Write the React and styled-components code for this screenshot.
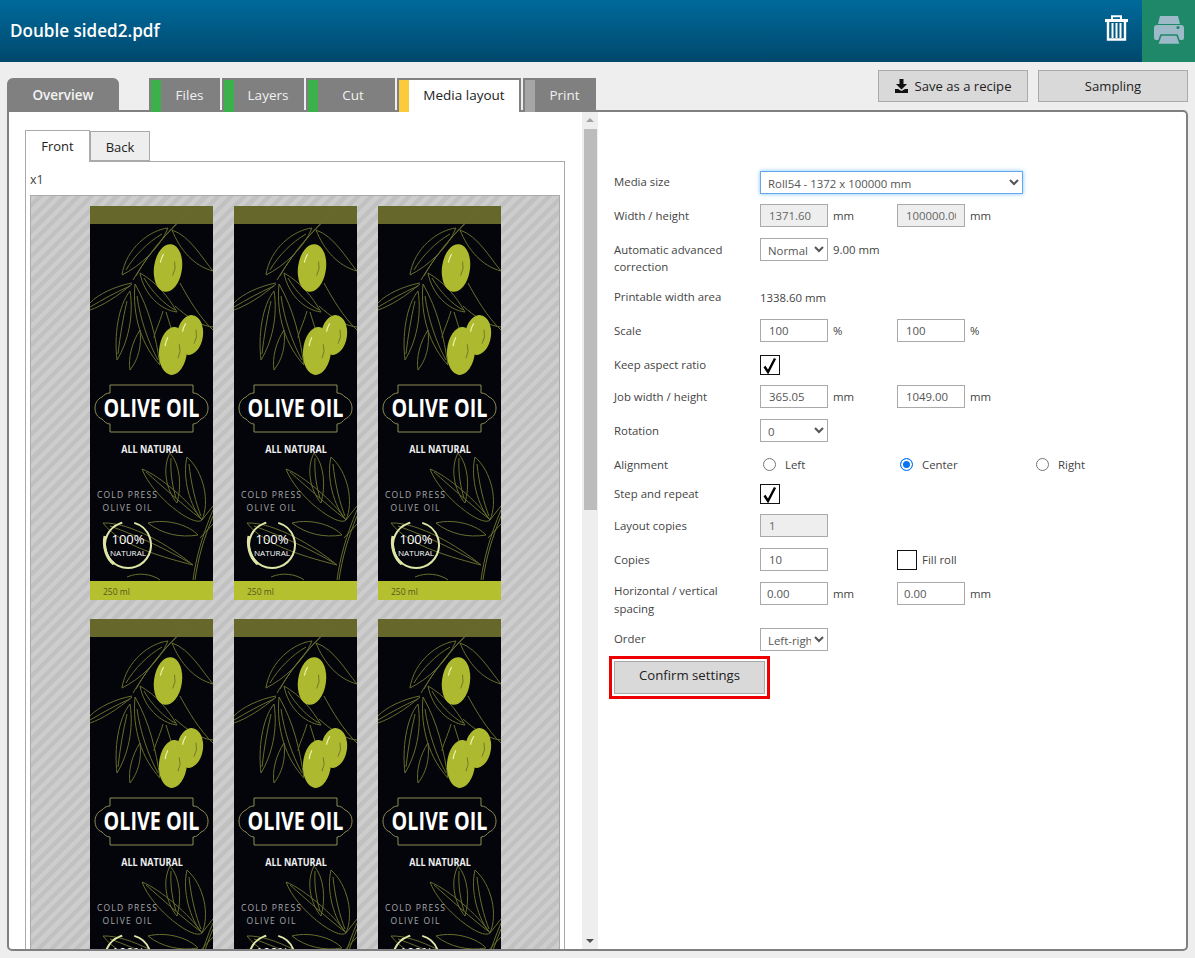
import React from "react";
import styled, { createGlobalStyle } from "styled-components";

const GlobalStyle = createGlobalStyle`
  html, body {
    margin: 0;
    height: 958px;
    overflow: hidden;
    background: #eeeeee;
    font-family: "Open Sans", "Liberation Sans", sans-serif;
  }
`;

const Page = styled.div`
  width: 1195px;
  height: 958px;
  overflow: hidden;
`;

// Header
const Header = styled.header`
  height: 62px;
  display: flex;
  align-items: center;
  justify-content: space-between;
  background: linear-gradient(#006a9b, #00486c);
`;

const Title = styled.h1`
  margin: 0 0 2px 10px;
  font-size: 17.1px;
  font-weight: 600;
  color: #ffffff;
`;

const HeaderActions = styled.div`
  display: flex;
  align-items: center;
  height: 100%;
`;

const TrashButton = styled.div`
  display: flex;
  margin: 0 14px 6px 0;
`;

const PrintButton = styled.div`
  width: 53px;
  height: 100%;
  box-sizing: border-box;
  padding-bottom: 2px;
  display: flex;
  align-items: center;
  justify-content: center;
  background: #1f8868;
`;

// Tabs and actions
const TopBar = styled.div`
  height: 50px;
  margin: 0 7px;
  display: flex;
  justify-content: space-between;
`;

const Tabs = styled.nav`
  position: relative;
  z-index: 1;
  height: 34px;
  margin-top: 16px;
  display: flex;
  gap: 2px;
`;

const OverviewTab = styled.div`
  width: 112px;
  margin-right: 28px;
  display: flex;
  align-items: center;
  justify-content: center;
  background: #808080;
  border-radius: 6px 6px 0 0;
  color: #f4f4f4;
  font-size: 13.5px;
  font-weight: 600;
`;

const Tab = styled.div`
  width: ${(p) => p.$width}px;
  display: flex;
  box-sizing: border-box;
  border: 2px solid #808080;
  border-bottom: 0;
  background: ${(p) => (p.$active ? "#ffffff" : "#808080")};
  color: ${(p) => (p.$active ? "#222222" : "#f0f0f0")};
  font-size: 13.5px;
`;

const TabStatus = styled.span`
  width: 10px;
  flex: none;
  background: ${(p) => p.$color};
`;

const TabLabel = styled.span`
  flex: 1;
  padding: 0 ${(p) => p.$shift || 0}px 2px 0;
  display: flex;
  align-items: center;
  justify-content: center;
`;

const Actions = styled.div`
  display: flex;
  gap: 10px;
  margin-top: 8px;
`;

const ActionButton = styled.button`
  width: 150px;
  height: 32px;
  padding: 0;
  display: flex;
  align-items: center;
  justify-content: center;
  gap: 7px;
  border: 1px solid #aaaaaa;
  background: #d9d9d9;
  color: #222222;
  font-family: inherit;
  font-size: 13.1px;
`;

// Main panel
const Panel = styled.main`
  height: 841px;
  margin: -2px 7px 0;
  box-sizing: border-box;
  display: flex;
  border: 2px solid #808080;
  border-radius: 0 5px 5px 5px;
  background: #ffffff;
  overflow: hidden;
`;

const PreviewPane = styled.section`
  width: 573px;
  flex: none;
  box-sizing: border-box;
  padding: 18px 17px 0 16px;
  overflow: hidden;
`;

const SideTabs = styled.div`
  height: 31px;
  display: flex;
  align-items: flex-end;
`;

const SideTab = styled.div`
  width: ${(p) => p.$width}px;
  height: ${(p) => (p.$active ? 32 : 30)}px;
  margin-bottom: ${(p) => (p.$active ? -1 : 0)}px;
  padding: ${(p) => (p.$active ? "0 0 1px" : "2px 0 0")};
  position: relative;
  box-sizing: border-box;
  display: flex;
  align-items: center;
  justify-content: center;
  border: 1px solid #aaaaaa;
  border-bottom: ${(p) => (p.$active ? "0" : "1px solid #aaaaaa")};
  background: ${(p) => (p.$active ? "#ffffff" : "#eeeeee")};
  color: #222222;
  font-size: 13px;
`;

const SideContent = styled.div`
  height: 800px;
  box-sizing: border-box;
  padding: 0 4px;
  border: 1px solid #aaaaaa;
`;

const Zoom = styled.div`
  height: 33px;
  box-sizing: border-box;
  padding-top: 2px;
  display: flex;
  align-items: center;
  color: #444444;
  font-size: 12.5px;
`;

const Sheet = styled.div`
  height: 780px;
  box-sizing: border-box;
  padding: 10px 0 0 59px;
  display: grid;
  grid-template-columns: repeat(3, 123px);
  grid-auto-rows: 394px;
  column-gap: 21px;
  row-gap: 19px;
  overflow: hidden;
  border: 1px solid #aaaaaa;
  background: repeating-linear-gradient(
    135deg,
    #cdcdcd 0,
    #cdcdcd 4.5px,
    #c1c1c1 4.5px,
    #c1c1c1 9px
  );
`;

const Scrollbar = styled.div`
  width: 16px;
  flex: none;
  padding-top: 6px;
  box-sizing: border-box;
  display: flex;
  flex-direction: column;
  align-items: center;
  background: #eeeeee;
`;

const ScrollArrow = styled.span`
  width: 0;
  height: 0;
  border-left: 4px solid transparent;
  border-right: 4px solid transparent;
  border-bottom: ${(p) => (p.$down ? "0" : "4px solid #a3a3a3")};
  border-top: ${(p) => (p.$down ? "4px solid #505050" : "0")};
`;

const ScrollThumb = styled.div`
  width: 13px;
  height: 381px;
  margin: 7px 0 auto;
  background: #bcbcbc;
`;

const ScrollSpacer = styled.div`
  height: 6px;
  flex: none;
`;

// Settings form
const SettingsPane = styled.section`
  flex: 1;
  padding: 59px 0 0 16px;
  color: #444444;
  font-size: 11.4px;
`;

const Row = styled.div`
  height: ${(p) => p.$height}px;
  display: grid;
  grid-template-columns: 146px 137px 136px 1fr;
  align-items: start;
`;

const Label = styled.label`
  display: block;
  line-height: ${(p) => p.$line || 23}px;
  padding-top: ${(p) => p.$top || 0}px;
`;

const Cell = styled.div`
  height: 23px;
  display: flex;
  align-items: center;
  gap: 5px;
  white-space: nowrap;
`;

const CheckCell = styled.div`
  display: flex;
`;

const Input = styled.input`
  width: 68px;
  height: 23px;
  flex: none;
  box-sizing: border-box;
  padding: 0 8px 0 ${(p) => p.$pad || 8}px;
  border: 1px solid #aaaaaa;
  border-radius: 0;
  outline: 0;
  background: ${(p) => (p.disabled ? "#eeeeee" : "#ffffff")};
  color: ${(p) => (p.disabled ? "#666666" : "#555555")};
  font-family: inherit;
  font-size: 11.4px;
`;

const Select = styled.select`
  width: ${(p) => p.$width || 68}px;
  height: 23px;
  flex: none;
  box-sizing: border-box;
  padding: 1px 0 0 3px;
  border: 1px solid ${(p) => (p.$focus ? "#64a9ec" : "#aaaaaa")};
  border-radius: 0;
  outline: 0;
  box-shadow: ${(p) => (p.$focus ? "0 0 4px #7cc0ff" : "none")};
  background-color: #ffffff;
  color: #555555;
  font-family: inherit;
  font-size: 11.4px;
`;

const CheckBox = styled.span`
  width: 20px;
  height: 20px;
  flex: none;
  box-sizing: border-box;
  display: flex;
  align-items: center;
  justify-content: center;
  border: 1px solid #111111;
  background: #ffffff;
`;

const Radio = styled.span`
  width: 13px;
  height: 13px;
  margin-left: 3px;
  flex: none;
  box-sizing: border-box;
  border-radius: 50%;
  border: ${(p) => (p.$checked ? "1px solid #0a75f0" : "1px solid #767676")};
  background: ${(p) => (p.$checked ? "#0a75f0" : "#ffffff")};
  box-shadow: ${(p) => (p.$checked ? "inset 0 0 0 2px #ffffff" : "none")};
`;

const RadioCell = styled(Cell)`
  gap: 9px;
`;

const Highlight = styled.div`
  width: 161px;
  height: 43px;
  margin-left: -5px;
  box-sizing: border-box;
  padding: 2px;
  border: 3px solid #ee0000;
`;

const ConfirmButton = styled.button`
  width: 100%;
  height: 100%;
  padding: 0 0 5px;
  border: 1px solid #aaaaaa;
  background: #d9d9d9;
  color: #222222;
  font-family: inherit;
  font-size: 13.2px;
`;

const TrashIcon = () => (
  <svg width="23" height="26" viewBox="0 0 23 26">
    <path d="M7 4V1.2h9V4" fill="none" stroke="#fff" strokeWidth="2" />
    <rect y="4" width="23" height="3" fill="#fff" />
    <path d="M3 7v17.5h17V7" fill="none" stroke="#fff" strokeWidth="2.4" />
    <path d="M7.5 8v15M11.5 8v15M15.5 8v15" stroke="#fff" strokeWidth="2" />
  </svg>
);

const PrinterIcon = () => (
  <svg width="30" height="28" viewBox="0 0 30 28">
    <path d="M6 0h18l2 8H4z" fill="#9cbac8" />
    <path
      d="M3 9h24a3 3 0 0 1 3 3v10a2 2 0 0 1-2 2H2a2 2 0 0 1-2-2V12a3 3 0 0 1 3-3z"
      fill="#9cbac8"
    />
    <path d="M7 19h16l3.5 9.5h-23z" fill="#9cbac8" stroke="#1f8868" strokeWidth="1.6" />
    <circle cx="24" cy="11.5" r="1.6" fill="#1f8868" />
  </svg>
);

const SaveIcon = () => (
  <svg width="13" height="14" viewBox="0 0 13 14">
    <path d="M4.5 0h4v5H12L6.5 10.5 1 5h3.5z" fill="#111" />
    <path d="M0 10h3l3.5 2 3.5-2h3v4H0z" fill="#111" />
  </svg>
);

const CheckMark = () => (
  <svg width="16" height="17" viewBox="0 0 16 17">
    <path d="M2.5 9.5L6 15 13 1.5" fill="none" stroke="#000" strokeWidth="2.4" />
  </svg>
);

const leafStroke = "#686c2d";
const topLeaves = [
  "M96 8C84 20 62 42 43 74",
  "M93 12C80 24 60 44 46 70",
  "M78 22C60 24 36 42 32 69C50 60 70 42 78 22Z",
  "M72 28C58 36 44 50 36 64",
  "M82 24C90 44 104 60 123 65C112 52 100 30 82 24Z",
  "M42 77C26 80 8 88 0 97M42 78C28 90 12 100 0 104M40 80C26 86 12 94 0 101",
  "M40 85C28 100 24 130 27 154C38 136 44 110 40 85Z",
  "M37 95C33 112 30 130 28 148",
  "M45 78C42 110 52 140 70 159C66 132 60 104 45 78Z",
  "M47 90C50 112 58 136 68 154",
  "M50 67C54 88 70 104 87 106C78 90 66 76 50 67Z",
  "M54 72C62 86 74 98 85 104",
  "M50 124C42 136 38 152 40 164C48 154 52 140 50 124Z",
  "M90 77C98 92 110 112 123 124M85 100C96 110 110 120 123 121",
  "M73 105C70 116 64 128 64 132M76 106L81 122",
];
const bottomLeaves = [
  "M103 374C106 352 112 330 123 304",
  "M105 374C108 352 114 332 123 310",
  "M52 263C70 270 100 296 112 314C104 322 62 290 52 263Z",
  "M56 266C72 280 94 300 110 312",
  "M80 247C72 262 76 284 87 297C92 280 90 258 80 247Z",
  "M81 252C80 268 83 282 86 292",
  "M97 251C92 272 100 300 112 314C120 296 114 266 97 251Z",
  "M99 258C101 278 106 298 111 310",
  "M58 317C78 312 100 320 108 329C90 332 72 328 58 317Z",
  "M13 317C40 316 80 340 103 359C76 352 30 340 13 317Z",
  "M20 320C48 330 78 344 100 357",
  "M37 371C48 366 62 368 70 374",
  "M112 314L123 300M110 332L123 318",
];

const Olive = ({ cx, cy, rx, ry, angle }) => (
  <g transform={`rotate(${angle} ${cx} ${cy})`}>
    <ellipse cx={cx} cy={cy} rx={rx} ry={ry} fill="#adb92e" />
    <path
      d={`M${cx - rx * 0.45} ${cy - ry * 0.55}q-2 5 -2 9`}
      stroke="#eef2b0"
      strokeWidth="1.2"
      fill="none"
    />
    <path
      d={`M${cx + rx * 0.4} ${cy - ry * 0.3}q3 7 0 14`}
      stroke="#5f6329"
      strokeWidth="0.7"
      fill="none"
    />
  </g>
);

const LabelArt = () => (
  <svg width="123" height="394" viewBox="0 0 123 394">
    <rect width="123" height="394" fill="#04050a" />
    <rect width="123" height="18" fill="#66682b" />
    <rect y="375" width="123" height="19" fill="#b5c02f" />
    <g fill="none" stroke={leafStroke} strokeWidth="1">
      {topLeaves.map((d) => (
        <path key={d} d={d} />
      ))}
      {bottomLeaves.map((d) => (
        <path key={d} d={d} />
      ))}
    </g>
    <Olive cx={78} cy={62} rx={14} ry={24} angle={8} />
    <Olive cx={100} cy={129} rx={13} ry={20} angle={8} />
    <Olive cx={83} cy={145} rx={14} ry={24} angle={5} />
    <path
      d="M20 179H103V187C107 187 109 189 111 191C116 193 118 198 118 202C118 207 116 211 111 213C109 215 107 218 103 218V226H20V218C16 218 14 215 12 213C7 211 5 207 5 202C5 198 7 193 12 191C14 189 16 187 20 187Z"
      fill="#04050a"
      stroke="#8a8d55"
      strokeWidth="1"
    />
    <text
      transform="translate(61.5 211) scale(0.79 1)"
      textAnchor="middle"
      fontFamily="'Open Sans', sans-serif"
      fontWeight="700"
      fontSize="25"
      fill="#ffffff"
    >
      OLIVE OIL
    </text>
    <text
      transform="translate(62 247) scale(0.86 1)"
      textAnchor="middle"
      fontFamily="'Open Sans', sans-serif"
      fontWeight="700"
      fontSize="10.5"
      fill="#f0f0f0"
    >
      ALL NATURAL
    </text>
    <g fontFamily="'Open Sans', sans-serif" fontSize="8.5" fill="#a8a8a8" textAnchor="middle">
      <text x="37" y="292" textLength="60">COLD PRESS</text>
      <text x="37" y="305" textLength="49">OLIVE OIL</text>
    </g>
    <circle
      cx="38"
      cy="339"
      r="23"
      fill="none"
      stroke="#dfe5a6"
      strokeWidth="2"
      strokeDasharray="110 12 22 6"
      transform="rotate(-20 38 339)"
    />
    <path d="M15 330C13 340 16 352 24 358" fill="none" stroke="#dfe5a6" strokeWidth="3" />
    <text
      x="38"
      y="338"
      textAnchor="middle"
      fontFamily="'Open Sans', sans-serif"
      fontSize="13"
      fill="#ffffff"
    >
      100%
    </text>
    <text
      x="38"
      y="350"
      textAnchor="middle"
      textLength="36"
      lengthAdjust="spacingAndGlyphs"
      fontFamily="'Open Sans', sans-serif"
      fontSize="8"
      fill="#ffffff"
    >
      NATURAL
    </text>
    <text x="13" y="389" fontFamily="'Open Sans', sans-serif" fontSize="8.5" fill="#55591f">
      250 ml
    </text>
  </svg>
);

const stepTabs = [
  { name: "Files", width: 71, color: "#3cb04a" },
  { name: "Layers", width: 82, color: "#3cb04a" },
  { name: "Cut", width: 89, color: "#3cb04a", shift: 5 },
  { name: "Media layout", width: 124, color: "#fccb3c", active: true },
  { name: "Print", width: 73, color: "#a6a6a6" },
];

const App = () => {
  return (
    <Page>
      <GlobalStyle />
      <Header>
        <Title>Double sided2.pdf</Title>
        <HeaderActions>
          <TrashButton>
            <TrashIcon />
          </TrashButton>
          <PrintButton>
            <PrinterIcon />
          </PrintButton>
        </HeaderActions>
      </Header>

      <TopBar>
        <Tabs>
          <OverviewTab>Overview</OverviewTab>
          {stepTabs.map((tab) => (
            <Tab key={tab.name} $width={tab.width} $active={tab.active}>
              <TabStatus $color={tab.color} />
              <TabLabel $shift={tab.shift}>{tab.name}</TabLabel>
            </Tab>
          ))}
        </Tabs>
        <Actions>
          <ActionButton>
            <SaveIcon />
            Save as a recipe
          </ActionButton>
          <ActionButton>Sampling</ActionButton>
        </Actions>
      </TopBar>

      <Panel>
        <PreviewPane>
          <SideTabs>
            <SideTab $width={65} $active>
              Front
            </SideTab>
            <SideTab $width={60}>Back</SideTab>
          </SideTabs>
          <SideContent>
            <Zoom>x1</Zoom>
            <Sheet>
              {[0, 1, 2, 3, 4, 5].map((i) => (
                <LabelArt key={i} />
              ))}
            </Sheet>
          </SideContent>
        </PreviewPane>

        <Scrollbar>
          <ScrollArrow />
          <ScrollThumb />
          <ScrollArrow $down />
          <ScrollSpacer />
        </Scrollbar>

        <SettingsPane>
          <Row $height={33}>
            <Label $line={21}>Media size</Label>
            <Cell>
              <Select $width={263} $focus defaultValue="roll54">
                <option value="roll54">Roll54 - 1372 x 100000 mm</option>
              </Select>
            </Cell>
          </Row>
          <Row $height={34}>
            <Label>Width / height</Label>
            <Cell>
              <Input disabled value="1371.60" readOnly />
              mm
            </Cell>
            <Cell>
              <Input disabled value="100000.00" readOnly />
              mm
            </Cell>
          </Row>
          <Row $height={48}>
            <Label $line={17} $top={3}>
              Automatic advanced
              <br />
              correction
            </Label>
            <Cell>
              <Select defaultValue="normal">
                <option value="normal">Normal</option>
              </Select>
              9.00 mm
            </Cell>
          </Row>
          <Row $height={33}>
            <Label $line={21}>Printable width area</Label>
            <Cell>1338.60 mm</Cell>
          </Row>
          <Row $height={36}>
            <Label>Scale</Label>
            <Cell>
              <Input value="100" readOnly />%
            </Cell>
            <Cell>
              <Input value="100" readOnly />%
            </Cell>
          </Row>
          <Row $height={30}>
            <Label $line={20}>Keep aspect ratio</Label>
            <CheckCell>
              <CheckBox>
                <CheckMark />
              </CheckBox>
            </CheckCell>
          </Row>
          <Row $height={34}>
            <Label>Job width / height</Label>
            <Cell>
              <Input value="365.05" readOnly />
              mm
            </Cell>
            <Cell>
              <Input value="1049.00" readOnly />
              mm
            </Cell>
          </Row>
          <Row $height={34}>
            <Label>Rotation</Label>
            <Cell>
              <Select defaultValue="0">
                <option value="0">0</option>
              </Select>
            </Cell>
          </Row>
          <Row $height={31}>
            <Label>Alignment</Label>
            <RadioCell>
              <Radio />
              Left
            </RadioCell>
            <RadioCell>
              <Radio $checked />
              Center
            </RadioCell>
            <RadioCell>
              <Radio />
              Right
            </RadioCell>
          </Row>
          <Row $height={30}>
            <Label $line={20}>Step and repeat</Label>
            <CheckCell>
              <CheckBox>
                <CheckMark />
              </CheckBox>
            </CheckCell>
          </Row>
          <Row $height={34}>
            <Label>Layout copies</Label>
            <Cell>
              <Input disabled value="1" readOnly />
            </Cell>
          </Row>
          <Row $height={34}>
            <Label>Copies</Label>
            <Cell>
              <Input value="10" readOnly />
            </Cell>
            <Cell>
              <CheckBox />
              Fill roll
            </Cell>
          </Row>
          <Row $height={46}>
            <Label $line={18}>
              Horizontal / vertical
              <br />
              spacing
            </Label>
            <Cell>
              <Input $pad={6} value="0.00" readOnly />
              mm
            </Cell>
            <Cell>
              <Input $pad={6} value="0.00" readOnly />
              mm
            </Cell>
          </Row>
          <Row $height={28}>
            <Label $line={21}>Order</Label>
            <Cell>
              <Select defaultValue="lr">
                <option value="lr">Left-right</option>
              </Select>
            </Cell>
          </Row>
          <Highlight>
            <ConfirmButton>Confirm settings</ConfirmButton>
          </Highlight>
        </SettingsPane>
      </Panel>
    </Page>
  );
};

export default App;
